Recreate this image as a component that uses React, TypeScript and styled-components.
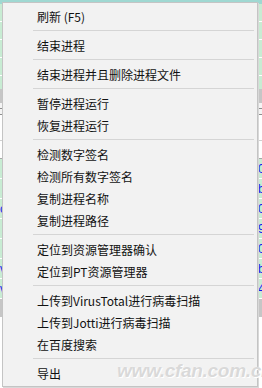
import React from "react";
import styled, { createGlobalStyle } from "styled-components";

const Global = createGlobalStyle`
  html, body { margin: 0; padding: 0; width: 262px; height: 388px; overflow: hidden; background: #ffffff; }
  #root { width: 262px; height: 388px; }
`;

const Screen = styled.div`
  position: relative;
  width: 262px;
  height: 388px;
  overflow: hidden;
  font-family: "Noto Sans CJK SC", "Noto Sans", sans-serif;
`;

/* background list window (mostly hidden behind the menu) */
const List = styled.div`
  display: flex;
  flex-direction: column;
  width: 262px;
  height: 388px;
`;

const Band = styled.div<{ $bg: string; $h: number; $line?: string }>`
  height: ${(p) => p.$h}px;
  flex: none;
  background: ${(p) => p.$bg};
  box-sizing: border-box;
  border-bottom: ${(p) => (p.$line ? `1px solid ${p.$line}` : "none")};
  display: flex;
  justify-content: space-between;
  align-items: center;
  font-family: "Liberation Sans", sans-serif;
  font-size: 12px;
  color: #1a1af0;
  line-height: 1;
`;

const Glyph = styled.span`
  width: 4px;
  overflow: hidden;
  display: block;
`;

const Menu = styled.div`
  position: absolute;
  left: 2px;
  top: 2px;
  width: 256px;
  box-sizing: border-box;
  background: #f2f2f2;
  border: 1px solid #c4c4c4;
  box-shadow: 1px 1px 0 #d8d8d8;
  padding: 2px 2px;
  display: flex;
  flex-direction: column;
`;

const Item = styled.div`
  height: 22px;
  display: flex;
  align-items: center;
  padding-left: 32px;
  font-size: 12px;
  color: #111111;
  white-space: nowrap;
  letter-spacing: 0;
`;

const Separator = styled.div`
  height: 1px;
  margin: 3px 1px 3px 28px;
  background: #d5d5d5;
`;

const Watermark = styled.div`
  position: absolute;
  left: 117px;
  top: 360px;
  font-family: "Liberation Sans", sans-serif;
  font-style: italic;
  font-weight: bold;
  font-size: 19px;
  letter-spacing: -0.3px;
  color: #d9d9d9;
  text-shadow: 0 0 1px #ffffff, 1px 1px 0 #ffffff;
  pointer-events: none;
`;

type Entry = string | null;

const entries: Entry[] = [
  "刷新 (F5)",
  null,
  "结束进程",
  null,
  "结束进程并且删除进程文件",
  null,
  "暂停进程运行",
  "恢复进程运行",
  null,
  "检测数字签名",
  "检测所有数字签名",
  "复制进程名称",
  "复制进程路径",
  null,
  "定位到资源管理器确认",
  "定位到PT资源管理器",
  null,
  "上传到VirusTotal进行病毒扫描",
  "上传到Jotti进行病毒扫描",
  "在百度搜索",
  null,
  "导出",
];

const bands: { bg: string; h: number; line?: string; l?: string; r?: string }[] = [
  { bg: "#9fd8d2", h: 4, l: "", r: "" },
  { bg: "#c8ecd3", h: 18, line: "#ffffff" },
  { bg: "#c8ecd3", h: 18, line: "#ffffff", l: "" },
  { bg: "#c8ecd3", h: 18, line: "#ffffff", l: "" },
  { bg: "#c8ecd3", h: 18, line: "#ffffff" },
  { bg: "#c8ecd3", h: 13 },
  { bg: "#c6c6c6", h: 14 },
  { bg: "#f4f4f4", h: 6, line: "#8e8e8e" },
  { bg: "#f4f4f4", h: 6, line: "#8e8e8e" },
  { bg: "#ffffff", h: 26, line: "#d0d0d0" },
  { bg: "#ffffff", h: 18, line: "#a8a8a8" },
  { bg: "#c8ecd3", h: 20, line: "#ffffff", r: "0" },
  { bg: "#c8ecd3", h: 20, line: "#ffffff", r: "b" },
  { bg: "#c8ecd3", h: 20, line: "#ffffff", l: "c", r: "0" },
  { bg: "#c8ecd3", h: 20, line: "#ffffff", r: "9" },
  { bg: "#c8ecd3", h: 20, line: "#ffffff", r: "0" },
  { bg: "#c8ecd3", h: 20, line: "#ffffff", l: "v", r: "b" },
  { bg: "#c8ecd3", h: 20, line: "#ffffff", l: "v", r: "4" },
  { bg: "#c6c6c6", h: 18 },
  { bg: "#ffffff", h: 69 },
];

export default function App() {
  return (
    <>
      <Global />
      <Screen>
        <List>
          {bands.map((b, i) => (
            <Band key={i} $bg={b.bg} $h={b.h} $line={b.line}>
              <Glyph>{b.l ?? ""}</Glyph>
              <Glyph>{b.r ?? ""}</Glyph>
            </Band>
          ))}
        </List>
        <Menu>
          {entries.map((e, i) =>
            e === null ? <Separator key={i} /> : <Item key={i}>{e}</Item>
          )}
        </Menu>
        <Watermark>www.cfan.com.cn</Watermark>
      </Screen>
    </>
  );
}
